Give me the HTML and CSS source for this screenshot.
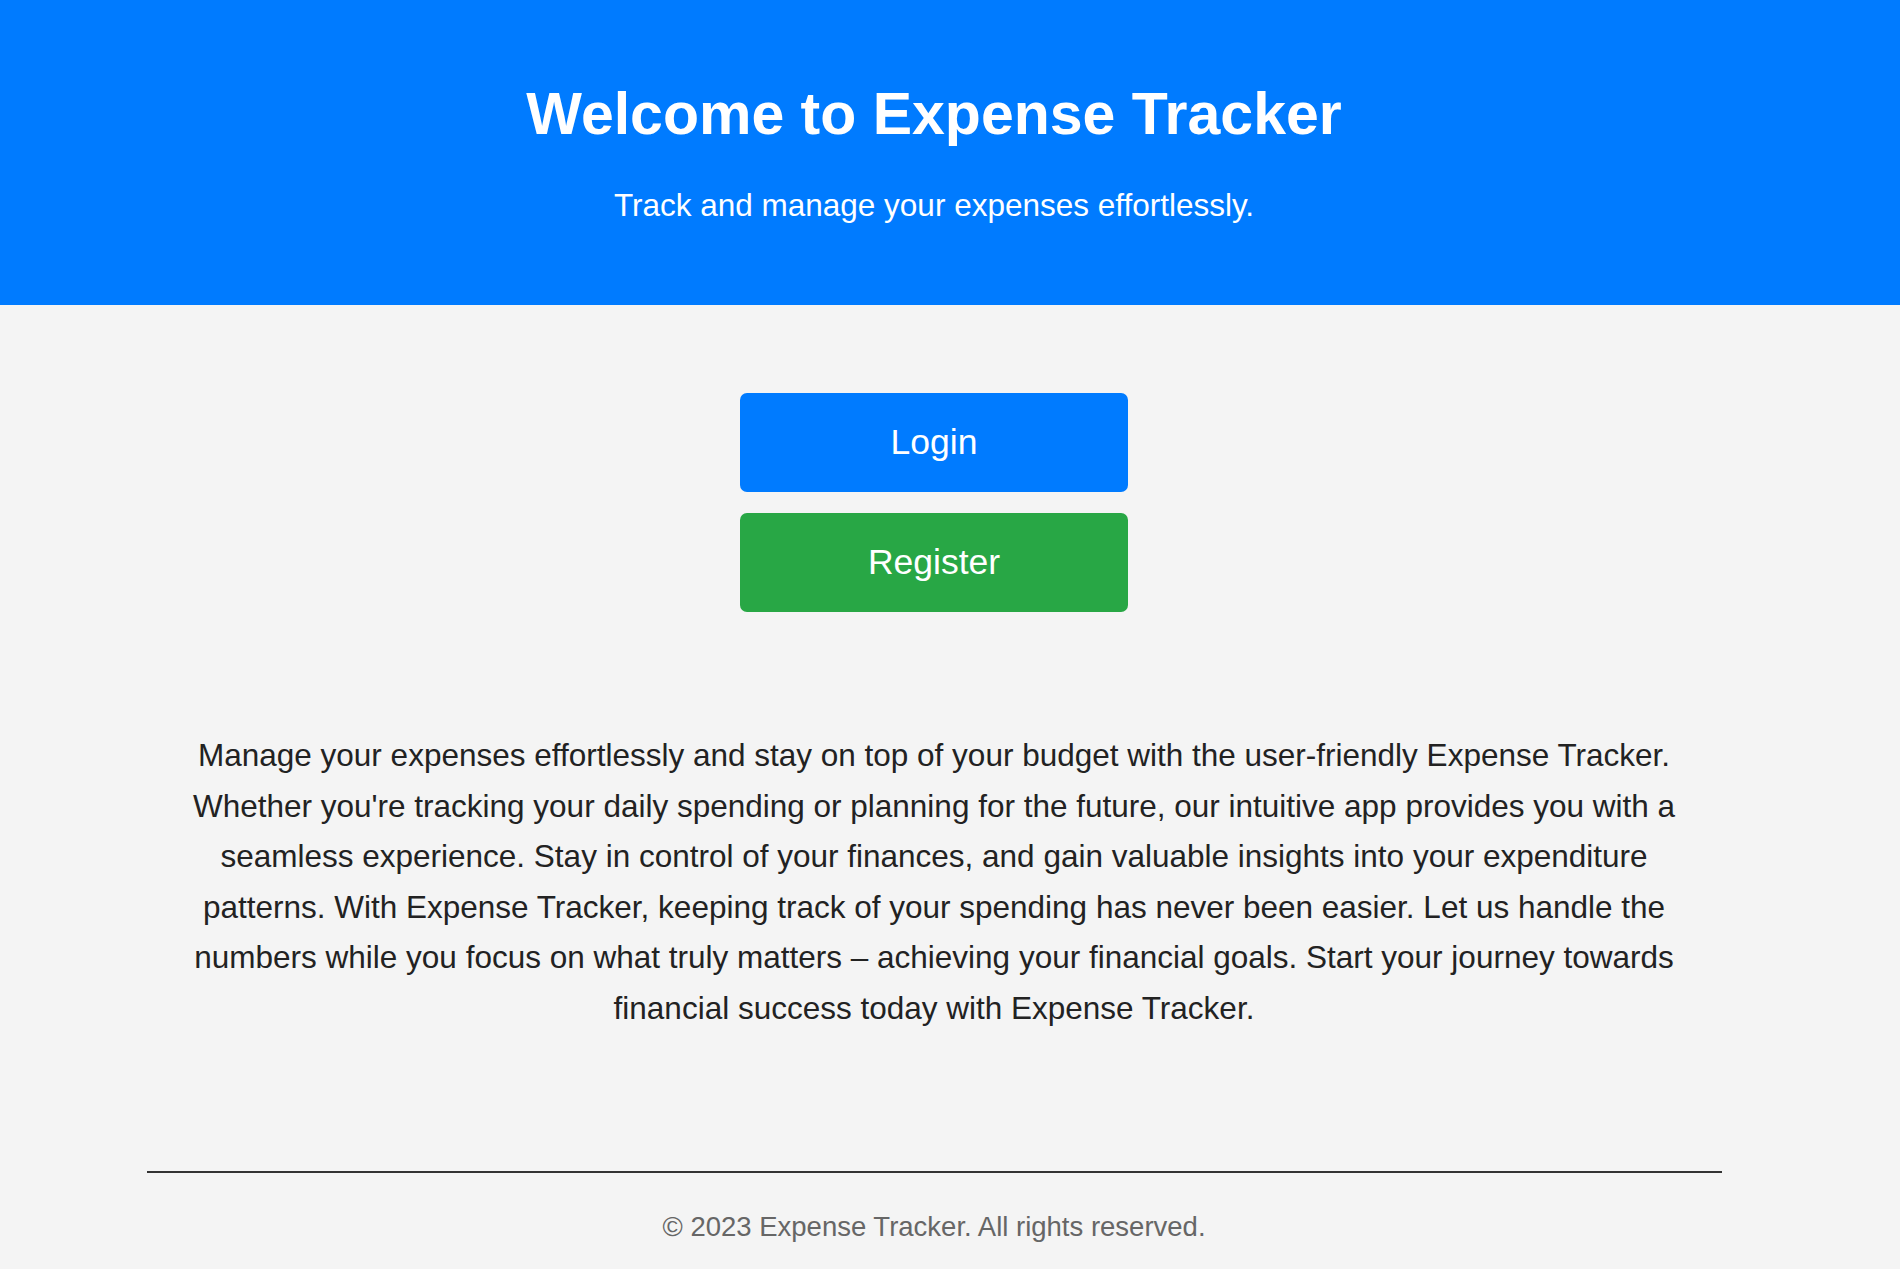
FILE: index.html
```html
<!DOCTYPE html>
<html lang="en">
<head>
<meta charset="utf-8">
<title>Expense Tracker</title>
<link rel="stylesheet" href="styles.css">
</head>
<body>
<header class="hero">
  <h1 class="hero-title">Welcome to Expense Tracker</h1>
  <p class="hero-sub">Track and manage your expenses effortlessly.</p>
</header>
<main class="main">
  <div class="actions">
    <a class="btn btn-login" href="#">Login</a>
    <a class="btn btn-register" href="#">Register</a>
  </div>
  <p class="intro">Manage your expenses effortlessly and stay on top of your budget with the user-friendly Expense Tracker. Whether you're tracking your daily spending or planning for the future, our intuitive app provides you with a seamless experience. Stay in control of your finances, and gain valuable insights into your expenditure patterns. With Expense Tracker, keeping track of your spending has never been easier. Let us handle the numbers while you focus on what truly matters – achieving your financial goals. Start your journey towards financial success today with Expense Tracker.</p>
  <footer class="footer">
    <p class="footer-text">© 2023 Expense Tracker. All rights reserved.</p>
  </footer>
</main>
</body>
</html>
```
FILE: styles.css
```css
html, body {
  margin: 0;
  padding: 0;
}
body {
  background: #f4f4f4;
  font-family: "Liberation Sans", Arial, sans-serif;
  color: #222;
  height: 1269px;
  overflow: hidden;
}
.hero {
  background: #007bff;
  color: #fff;
  text-align: center;
  padding: 81px 32px 82px 0;
  height: 305px;
  box-sizing: border-box;
}
.hero-title {
  margin: 0;
  font-size: 59px;
  line-height: 66px;
  font-weight: bold;
}
.hero-sub {
  margin: 40px 0 0;
  font-size: 31.5px;
  line-height: 36px;
}
.main {
  padding-right: 32px;
  display: flex;
  flex-direction: column;
  align-items: center;
}
.actions {
  margin-top: 88px;
  display: flex;
  flex-direction: column;
  gap: 21px;
}
.btn {
  width: 388px;
  height: 99px;
  border-radius: 7px;
  display: flex;
  align-items: center;
  justify-content: center;
  color: #fff;
  text-decoration: none;
  font-size: 35.5px;
}
.btn-login {
  background: #007bff;
}
.btn-register {
  background: #28a745;
}
.intro {
  width: 1520px;
  margin: 118px 0 0;
  text-align: center;
  font-size: 31.5px;
  line-height: 50.5px;
  color: #222;
}
.footer {
  width: 1575px;
  margin-top: 138px;
  border-top: 2px solid #333;
}
.footer-text {
  margin: 38px 0 0;
  text-align: center;
  font-size: 27.5px;
  line-height: 32px;
  color: #666;
}
```
